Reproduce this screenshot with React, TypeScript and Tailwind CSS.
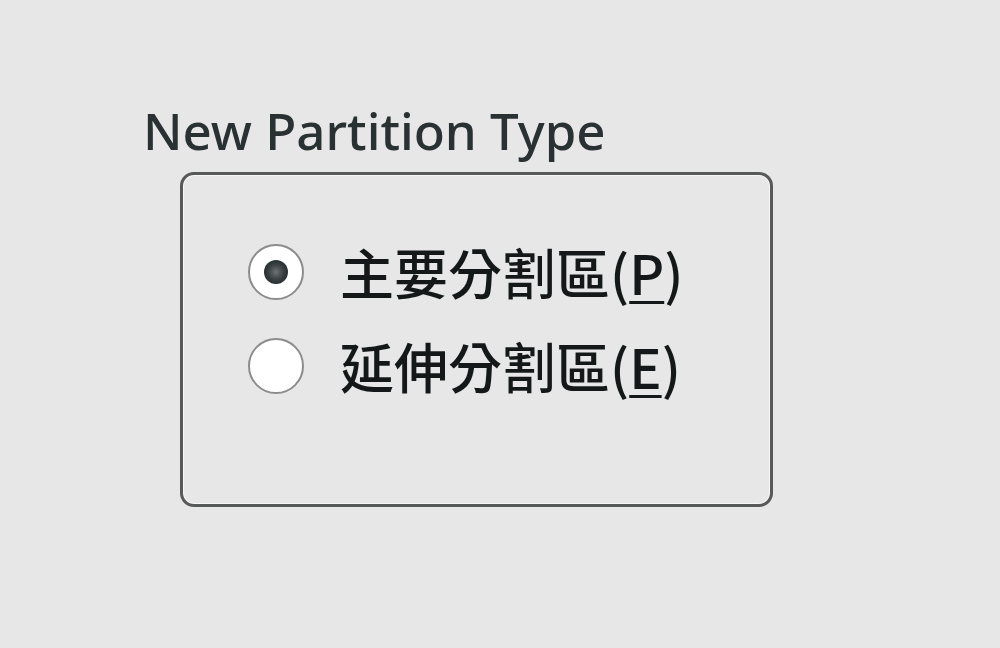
export default function App() {
  const options = [
    { label: "主要分割區", key: "P", checked: true },
    { label: "延伸分割區", key: "E", checked: false },
  ];

  return (
    <div className="w-[1000px] h-[648px] bg-[#e8e7e7] pl-[143px] pt-[105px] font-['Noto_Sans','Noto_Sans_CJK_TC',sans-serif]">
      <div className="text-[51px] leading-none font-medium text-[#2a3133] h-[67px]">New Partition Type</div>

      <div className="ml-[37px] w-[593px] h-[335px] border-[3px] border-[#585a5a] rounded-[14px] shadow-[inset_0_0_0_1px_#f7f7f7] pl-[65px] pt-[69px] flex flex-col gap-[38px]">
        {options.map((o) => (
          <div key={o.key} className="flex items-center h-[56px] gap-[36px]">
            <div className="w-[56px] h-[56px] rounded-full border-2 border-[#8c8c8c] bg-white flex items-center justify-center shrink-0">
              {o.checked && (
                <div className="w-[24px] h-[24px] rounded-full bg-[radial-gradient(circle,#6e7272_0%,#3a4143_45%,#252c2e_75%)]" />
              )}
            </div>
            <span className="text-[54px] leading-none font-medium text-[#141819] font-['Noto_Sans_CJK_TC',sans-serif]">
              {o.label}(<u className="underline-offset-[6px] decoration-[3px]">{o.key}</u>)
            </span>
          </div>
        ))}
      </div>
    </div>
  );
}
